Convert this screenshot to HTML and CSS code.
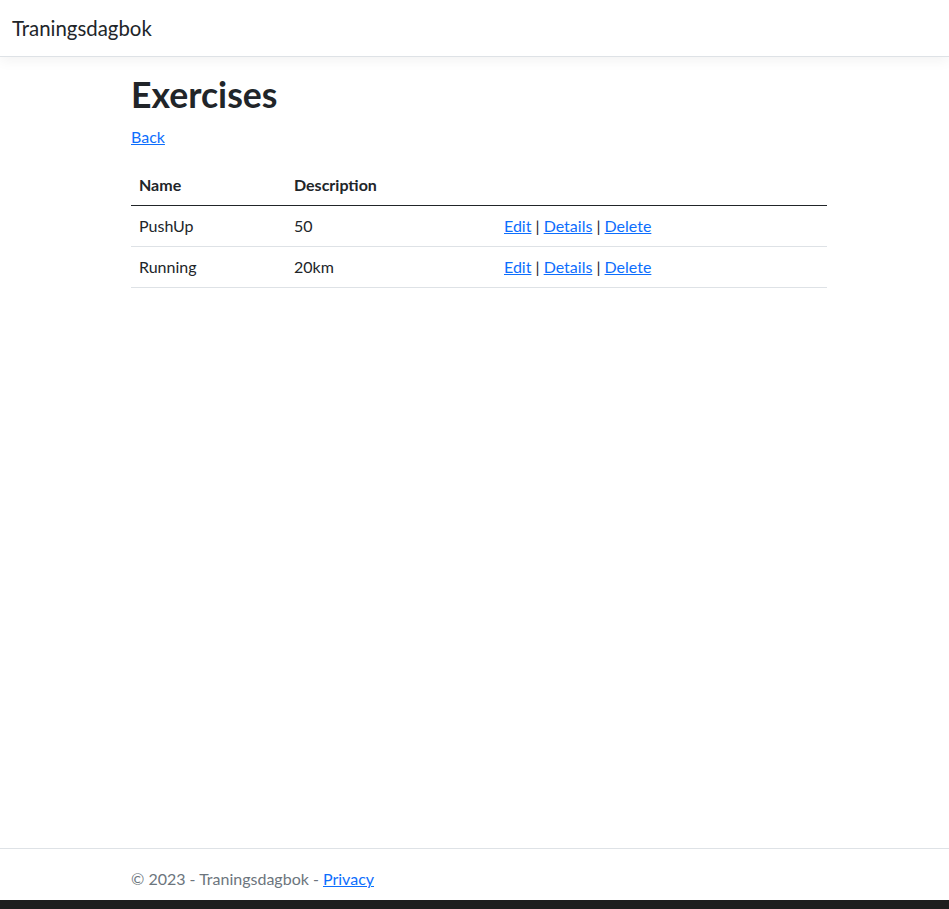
FILE: index.html
```html
<!DOCTYPE html>
<html lang="en">
<head>
<meta charset="utf-8">
<title>Exercises - Traningsdagbok</title>
<link rel="stylesheet" href="styles.css">
</head>
<body>
<div class="page">
  <header class="navbar">
    <a class="brand" href="#">Traningsdagbok</a>
  </header>
  <main class="main">
    <div class="container">
      <h1 class="title">Exercises</h1>
      <p class="back"><a href="#">Back</a></p>
      <table class="table">
        <thead>
          <tr>
            <th class="col-name">Name</th>
            <th class="col-desc">Description</th>
            <th></th>
          </tr>
        </thead>
        <tbody>
          <tr>
            <td>PushUp</td>
            <td>50</td>
            <td><a href="#">Edit</a> | <a href="#">Details</a> | <a href="#">Delete</a></td>
          </tr>
          <tr>
            <td>Running</td>
            <td>20km</td>
            <td><a href="#">Edit</a> | <a href="#">Details</a> | <a href="#">Delete</a></td>
          </tr>
        </tbody>
      </table>
    </div>
  </main>
  <footer class="footer">
    <div class="container footer-text">&copy; 2023 - Traningsdagbok - <a href="#">Privacy</a></div>
  </footer>
  <div class="bottom-bar"></div>
</div>
</body>
</html>
```
FILE: styles.css
```css
html, body {
  margin: 0;
  padding: 0;
}
body {
  font-family: "Lato", "Noto Sans", "Liberation Sans", sans-serif;
  font-size: 16px;
  line-height: 1.5;
  color: #212529;
  background: #fff;
}
a {
  color: #0d6efd;
  text-decoration: underline;
}
.page {
  display: flex;
  flex-direction: column;
  min-height: 100vh;
}
.navbar {
  height: 56px;
  border-bottom: 1px solid #dee2e6;
  box-shadow: 0 4px 12px rgba(0, 0, 0, 0.05);
  display: flex;
  align-items: center;
  padding: 0 12px;
}
.brand {
  font-size: 20.4px;
  color: #212529;
  text-decoration: none;
}
.main {
  flex: 1;
}
.container {
  width: 696px;
  margin-left: 131px;
}
.title {
  margin: 17px 0 8px;
  font-size: 35.6px;
  font-weight: 700;
  line-height: 1.2;
}
.back {
  margin: 0 0 16px;
}
.table {
  width: 100%;
  border-collapse: collapse;
}
.table th, .table td {
  text-align: left;
  padding: 8px;
  border-bottom: 1px solid #dee2e6;
  vertical-align: bottom;
}
.table th {
  font-weight: 700;
}
.table thead th {
  border-bottom: 1px solid #212529;
}
.col-name {
  width: 139px;
}
.col-desc {
  width: 194px;
}
.footer {
  height: 51px;
  border-top: 1px solid #dee2e6;
  color: #6c757d;
}
.footer-text {
  padding-top: 18px;
  line-height: 24px;
}
.bottom-bar {
  height: 9px;
  background: #1e1e1e;
}
```
